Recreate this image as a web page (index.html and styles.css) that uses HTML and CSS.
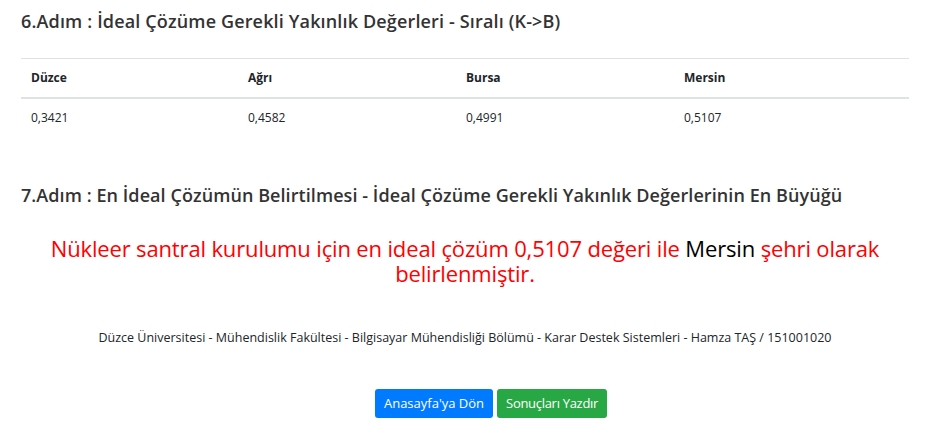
FILE: index.html
```html
<!DOCTYPE html>
<html lang="tr">
<head>
<meta charset="utf-8">
<title>Sonuç</title>
<link rel="stylesheet" href="styles.css">
</head>
<body>
<div class="page">
  <h5 class="step-title">6.Adım : İdeal Çözüme Gerekli Yakınlık Değerleri - Sıralı (K-&gt;B)</h5>
  <table class="rank-table">
    <colgroup>
      <col class="c1"><col class="c2"><col class="c3"><col class="c4">
    </colgroup>
    <thead>
      <tr><th>Düzce</th><th>Ağrı</th><th>Bursa</th><th>Mersin</th></tr>
    </thead>
    <tbody>
      <tr><td>0,3421</td><td>0,4582</td><td>0,4991</td><td>0,5107</td></tr>
    </tbody>
  </table>
  <h5 class="step-title step-7">7.Adım : En İdeal Çözümün Belirtilmesi - İdeal Çözüme Gerekli Yakınlık Değerlerinin En Büyüğü</h5>
  <p class="result">Nükleer santral kurulumu için en ideal çözüm 0,5107 değeri ile <span class="city">Mersin</span> şehri olarak belirlenmiştir.</p>
  <p class="footer-note">Düzce Üniversitesi - Mühendislik Fakültesi - Bilgisayar Mühendisliği Bölümü - Karar Destek Sistemleri - Hamza TAŞ / 151001020</p>
  <div class="actions">
    <a class="btn btn-blue" href="#">Anasayfa'ya Dön</a>
    <a class="btn btn-green" href="#">Sonuçları Yazdır</a>
  </div>
</div>
</body>
</html>
```
FILE: styles.css
```css
* { box-sizing: border-box; }
html, body { margin: 0; padding: 0; background: #fff; }
body {
  font-family: "Open Sans", "Noto Sans", sans-serif;
  color: #212529;
}
.page {
  padding: 0 32px 0 21px;
}
.step-title {
  margin: 0;
  padding-top: 9px;
  font-size: 18px;
  font-weight: 600;
  line-height: 24px;
  letter-spacing: 0.15px;
  color: #333;
}
.rank-table {
  width: 100%;
  border-collapse: collapse;
  table-layout: fixed;
  margin-top: 25px;
  font-size: 12px;
}
.c1 { width: 217px; }
.c2 { width: 218px; }
.c3 { width: 218px; }
.rank-table th, .rank-table td {
  text-align: left;
  padding: 11px 10px;
  line-height: 16px;
}
.rank-table th {
  font-weight: 700;
  border-top: 1px solid #dee2e6;
  border-bottom: 2px solid #dee2e6;
}
.step-7 {
  margin-top: 37px;
  letter-spacing: 0.07px;
}
.result {
  margin: 29px 0 0;
  text-align: center;
  color: #ff0000;
  font-size: 22px;
  line-height: 25px;
  letter-spacing: -0.15px;
}
.city { color: #000; }
.footer-note {
  margin: 43px 0 0;
  text-align: center;
  font-size: 12.5px;
  line-height: 18px;
}
.actions {
  display: flex;
  justify-content: center;
  gap: 4px;
  margin-top: 42px;
  padding-left: 52px;
}
.btn {
  display: block;
  padding: 6px 9px;
  font-size: 13px;
  line-height: 17px;
  color: #fff;
  text-decoration: none;
  border-radius: 3px;
}
.btn-blue { background: #007bff; }
.btn-green { background: #28a745; letter-spacing: -0.3px; }
```
